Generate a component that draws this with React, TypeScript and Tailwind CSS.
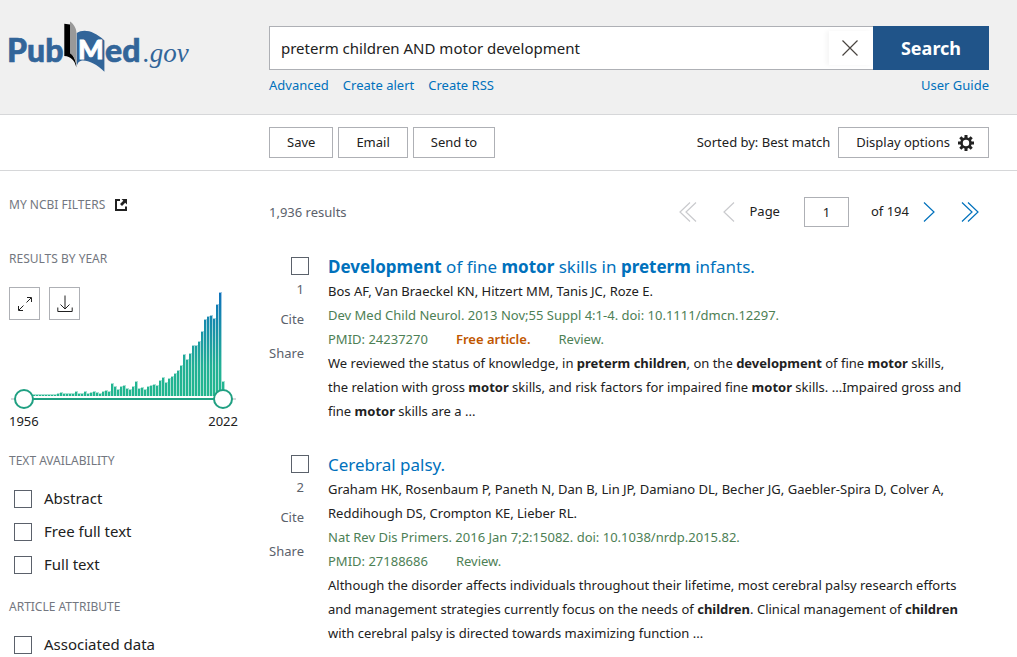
import { useState } from "react";
import type { ReactNode } from "react";

const yearCounts = [
  1, 1, 1, 2, 2, 2, 2, 2, 2, 2, 2, 3, 4, 3, 3, 3, 3, 5, 3, 3, 5, 3, 4, 5, 4, 3, 5, 6, 5, 13, 10, 7, 10, 11, 8,
  7, 10, 15, 8, 9, 7, 10, 11, 12, 11, 16, 19, 14, 18, 20, 23, 26, 31, 42, 37, 43, 51, 51, 55, 65, 77, 80, 81, 78,
  92, 104, 15,
];

const textAvailability = ["Abstract", "Free full text", "Full text"];

type Article = {
  title: ReactNode;
  authors: string;
  journal: string;
  pmid: string;
  free?: boolean;
  snippet: ReactNode;
};

const articles: Article[] = [
  {
    title: (
      <>
        <b>Development</b> of fine <b>motor</b> skills in <b>preterm</b> infants.
      </>
    ),
    authors: "Bos AF, Van Braeckel KN, Hitzert MM, Tanis JC, Roze E.",
    journal: "Dev Med Child Neurol. 2013 Nov;55 Suppl 4:1-4. doi: 10.1111/dmcn.12297.",
    pmid: "24237270",
    free: true,
    snippet: (
      <>
        We reviewed the status of knowledge, in <b>preterm children</b>, on the <b>development</b> of fine{" "}
        <b>motor</b> skills, the relation with gross <b>motor</b> skills, and risk factors for impaired fine{" "}
        <b>motor</b> skills. ...Impaired gross and fine <b>motor</b> skills are a ...
      </>
    ),
  },
  {
    title: "Cerebral palsy.",
    authors:
      "Graham HK, Rosenbaum P, Paneth N, Dan B, Lin JP, Damiano DL, Becher JG, Gaebler-Spira D, Colver A, Reddihough DS, Crompton KE, Lieber RL.",
    journal: "Nat Rev Dis Primers. 2016 Jan 7;2:15082. doi: 10.1038/nrdp.2015.82.",
    pmid: "27188686",
    snippet: (
      <>
        Although the disorder affects individuals throughout their lifetime, most cerebral palsy research efforts
        and management strategies currently focus on the needs of <b>children</b>. Clinical management of{" "}
        <b>children</b> with cerebral palsy is directed towards maximizing function ...
      </>
    ),
  },
];

function Logo() {
  return (
    <svg viewBox="4 20 192 56" className="w-[192px] h-[56px]" role="img" aria-label="PubMed.gov">
      <g fill="#326599" stroke="#326599" strokeWidth="0.6" fontFamily="Lato, sans-serif" fontWeight="900">
        <text x="7" y="62" fontSize="32">Pub</text>
        <text x="105" y="62" fontSize="32">ed</text>
      </g>
      <path d="M64.3 23.8L70 24.6V53C73.4 55 76 60 76.4 67.5C74.5 60 71 56.6 64.3 56Z" fill="#000" />
      <path d="M70 21.5C74 24 76.5 29 76.5 33V66C76 60 73 55 70 53Z" fill="#999" />
      <path
        d="M76.8 33C84 28.6 94 31 104.4 40.5V71.8C97 64 88 60 82 60.5C79 61 77.5 63 76.8 66Z"
        fill="#326599"
      />
      <text x="78" y="59" fontSize="27" fill="#fff" stroke="#fff" strokeWidth="0.8" fontFamily="Lato, sans-serif" fontWeight="900">
        M
      </text>
      <text x="143" y="62" fontSize="27" fill="#326599" fontFamily="Liberation Serif, serif" fontStyle="italic">
        .gov
      </text>
    </svg>
  );
}

function Gear() {
  return (
    <svg viewBox="0 0 16 16" className="w-4 h-4" fill="none" stroke="#212121" aria-hidden="true">
      <circle cx="8" cy="8" r="4.5" strokeWidth="2.6" />
      <path
        d="M8 0V3M8 13V16M0 8H3M13 8H16M2.3 2.3L4.4 4.4M11.6 11.6L13.7 13.7M13.7 2.3L11.6 4.4M4.4 11.6L2.3 13.7"
        strokeWidth="3"
      />
    </svg>
  );
}

function Checkbox({ id, label }: { id: string; label?: string }) {
  return (
    <input
      id={id}
      type="checkbox"
      aria-label={label}
      className="appearance-none w-[18px] h-[18px] shrink-0 border border-[#5b616b] bg-white checked:bg-[#205493]"
    />
  );
}

function FilterOption({ name }: { name: string }) {
  const id = name.toLowerCase().replace(/ /g, "-");
  return (
    <li className="flex items-center gap-3 h-[33px] pl-[5px] text-[15px]">
      <Checkbox id={id} />
      <label htmlFor={id}>{name}</label>
    </li>
  );
}

const thumb =
  "col-start-1 row-start-1 appearance-none w-full h-5 bg-transparent pointer-events-none [&::-webkit-slider-thumb]:pointer-events-auto [&::-webkit-slider-thumb]:appearance-none [&::-webkit-slider-thumb]:w-5 [&::-webkit-slider-thumb]:h-5 [&::-webkit-slider-thumb]:rounded-full [&::-webkit-slider-thumb]:border-2 [&::-webkit-slider-thumb]:border-[#20a082] [&::-webkit-slider-thumb]:bg-white";

function YearChart() {
  const [from, setFrom] = useState(1956);
  const [to, setTo] = useState(2022);

  return (
    <div className="w-[229px]">
      <div className="grid">
        <div className="col-start-1 row-start-1 flex items-start gap-[9px]">
          <button aria-label="Expand" className="w-[31px] h-[33px] grid place-items-center border border-[#aeb0b5]">
            <svg viewBox="0 0 14 14" className="w-3.5 h-3.5" fill="none" stroke="#212121" aria-hidden="true">
              <path d="M8.5 5.5L13 1M9 .5H13.5V5M5.5 8.5L1 13M.5 9V13.5H5" />
            </svg>
          </button>
          <button aria-label="Download" className="w-[31px] h-[33px] grid place-items-center border border-[#aeb0b5]">
            <svg viewBox="0 0 16 18" className="w-4 h-[18px]" fill="none" stroke="#212121" aria-hidden="true">
              <path d="M8 .5V14M3.5 9.5L8 14L12.5 9.5M.8 12.5V16.5H15.2V12.5" />
            </svg>
          </button>
        </div>
        <svg viewBox="0 0 229 110" className="col-start-1 row-start-1 w-[229px] h-[110px] pointer-events-none" aria-hidden="true">
          <defs>
            <linearGradient id="bars" gradientUnits="userSpaceOnUse" x1="0" y1="110" x2="0" y2="5">
              <stop offset="0" stopColor="#22b78f" />
              <stop offset="0.3" stopColor="#22b095" />
              <stop offset="1" stopColor="#0f71bc" />
            </linearGradient>
          </defs>
          {yearCounts.map((count, i) => (
            <g key={i} fill="url(#bars)">
              <rect x={15 + i * 3} y={109 - count} width="3" height={count} opacity="0.4" />
              <rect x={15 + i * 3} y={110 - count} width="2" height={count - 1} />
            </g>
          ))}
        </svg>
      </div>
      <div className="grid items-center mx-[5px] -mt-2">
        <div className="col-start-1 row-start-1 h-0.5 -mx-[3px] bg-[#d6d7d9]" />
        <div className="col-start-1 row-start-1 h-0.5 mx-2.5 bg-[#20a082]" />
        <input type="range" aria-label="From year" min={1956} max={2022} value={from} onChange={(e) => setFrom(+e.target.value)} className={thumb} />
        <input type="range" aria-label="To year" min={1956} max={2022} value={to} onChange={(e) => setTo(+e.target.value)} className={thumb} />
      </div>
      <div className="flex justify-between mt-0.5 text-[13px] leading-5">
        <span>{from}</span>
        <span>{to}</span>
      </div>
    </div>
  );
}

function Heading({ children }: { children: ReactNode }) {
  return <h3 className="text-xs leading-5 uppercase text-[#737780]">{children}</h3>;
}

function Sidebar() {
  return (
    <aside className="w-[260px] shrink-0 pt-6">
      <a href="#filters" className="flex items-center gap-2.5">
        <Heading>My NCBI Filters</Heading>
        <svg viewBox="0 0 12 12" className="w-3 h-3" fill="none" stroke="#212121" aria-hidden="true">
          <path d="M5 1H1V11H11V7.5" strokeWidth="2" />
          <path d="M6.5 0H12V5.5L10.2 3.7L7 7L5 5L8.3 1.8Z" fill="#212121" stroke="none" />
        </svg>
      </a>
      <div className="mt-[34px] mb-[18px]">
        <Heading>Results by year</Heading>
      </div>
      <YearChart />
      <div className="mt-5">
        <Heading>Text availability</Heading>
        <ul className="mt-[11px]">
          {textAvailability.map((name) => (
            <FilterOption key={name} name={name} />
          ))}
        </ul>
      </div>
      <div className="mt-4">
        <Heading>Article attribute</Heading>
        <ul className="mt-[11px]">
          <FilterOption name="Associated data" />
        </ul>
      </div>
    </aside>
  );
}

function Chevron({ d, label, disabled }: { d: string; label: string; disabled?: boolean }) {
  return (
    <button aria-label={label} disabled={disabled} className="text-[#0071bc] disabled:text-[#c9cacd]">
      <svg viewBox="0 0 18 20" className="w-[18px] h-5" fill="none" stroke="currentColor" strokeWidth="1.2" aria-hidden="true">
        <path d={d} />
      </svg>
    </button>
  );
}

function Pagination() {
  return (
    <nav aria-label="Pages" className="flex items-center pr-2.5">
      <div className="flex gap-6">
        <Chevron label="First page" disabled d="M11 .5L1 10L11 19.5M17 .5L7 10L17 19.5" />
        <Chevron label="Previous page" disabled d="M13 .5L3 10L13 19.5" />
      </div>
      <label htmlFor="page" className="ml-2.5">Page</label>
      <input id="page" defaultValue="1" className="w-[45px] h-[30px] ml-6 mr-[22px] border border-[#aeb0b5] text-center" />
      <span>of 194</span>
      <div className="flex gap-6 ml-2.5">
        <Chevron label="Next page" d="M5 .5L15 10L5 19.5" />
        <Chevron label="Last page" d="M1 .5L11 10L1 19.5M7 .5L17 10L7 19.5" />
      </div>
    </nav>
  );
}

function Result({ article, index }: { article: Article; index: number }) {
  return (
    <article className="flex gap-[19px]">
      <div className="w-10 shrink-0 flex flex-col items-end pt-0.5 text-[#5b616b]">
        <Checkbox id={`result-${index}`} label={`Select result ${index}`} />
        <div className="flex flex-col items-end pr-[5px] pt-1">
          <label htmlFor={`result-${index}`} className="leading-5">{index}</label>
          <button className="leading-5 mt-2.5">Cite</button>
          <button className="leading-5 mt-3.5">Share</button>
        </div>
      </div>
      <div className="min-w-0 flex-1 pr-6 leading-6">
        <h2 className="text-[17px] leading-6">
          <a href="#article" className="text-[#0071bc]">{article.title}</a>
        </h2>
        <p>{article.authors}</p>
        <p className="text-[#4d8055]">{article.journal}</p>
        <p className="flex gap-7 text-[#4d8055]">
          <span>PMID: {article.pmid}</span>
          {article.free && <span className="font-semibold text-[#c05600]">Free article.</span>}
          <span>Review.</span>
        </p>
        <p>{article.snippet}</p>
      </div>
    </article>
  );
}

const outline = "h-[31px] px-[17px] border border-[#aeb0b5] bg-white";

export default function App() {
  const [query, setQuery] = useState("preterm children AND motor development");

  return (
    <div className="min-h-screen bg-white font-['Noto_Sans',sans-serif] text-[13px] text-[#212121]">
      <header className="flex pl-1 pr-7 bg-[#f0f0f0] border-b border-[#d6d7d9]">
        <a href="#home" className="w-[265px] shrink-0 pt-5">
          <Logo />
        </a>
        <div className="flex-1 pt-[26px] pb-[19px]">
          <form className="flex h-11" onSubmit={(e) => e.preventDefault()}>
            <div className="flex flex-1 border border-r-0 border-[#aeb0b5] bg-white">
              <input
                aria-label="Search term"
                value={query}
                onChange={(e) => setQuery(e.target.value)}
                className="flex-1 min-w-0 pl-[11px] text-[15px] outline-none"
              />
              <button
                type="button"
                aria-label="Clear search"
                onClick={() => setQuery("")}
                className="w-11 my-1 pr-0.5 grid place-items-center shadow-[-3px_0_4px_rgba(0,0,0,0.04)]"
              >
                <svg viewBox="0 0 16 16" className="w-4 h-4" stroke="#494440" strokeWidth="1.2" aria-hidden="true">
                  <path d="M.5 .5L15.5 15.5M15.5 .5L.5 15.5" />
                </svg>
              </button>
            </div>
            <button className="w-[116px] bg-[#205489] text-lg font-bold text-white">Search</button>
          </form>
          <div className="flex justify-between pt-[5px] leading-5 text-[#0071bc]">
            <div className="flex gap-3.5">
              <a href="#advanced">Advanced</a>
              <a href="#alert">Create alert</a>
              <a href="#rss">Create RSS</a>
            </div>
            <a href="#guide">User Guide</a>
          </div>
        </div>
      </header>

      <div className="flex items-center justify-between py-3 pl-[269px] pr-7 border-b border-[#d6d7d9]">
        <div className="flex gap-[5px]">
          <button className={outline}>Save</button>
          <button className={outline}>Email</button>
          <button className={outline}>Send to</button>
        </div>
        <div className="flex items-center gap-2">
          <span>Sorted by: Best match</span>
          <button className="flex items-center gap-2 h-[31px] pl-[17px] pr-3.5 border border-[#aeb0b5]">
            Display options
            <Gear />
          </button>
        </div>
      </div>

      <div className="flex pl-[9px] pr-7">
        <Sidebar />
        <main className="min-w-0 flex-1 pt-[26px]">
          <div className="flex items-center justify-between">
            <span className="pt-0.5 text-[#5b616b]">1,936 results</span>
            <Pagination />
          </div>
          <div className="flex flex-col gap-[30px] mt-7">
            {articles.map((article, i) => (
              <Result key={article.pmid} article={article} index={i + 1} />
            ))}
          </div>
        </main>
      </div>
    </div>
  );
}
